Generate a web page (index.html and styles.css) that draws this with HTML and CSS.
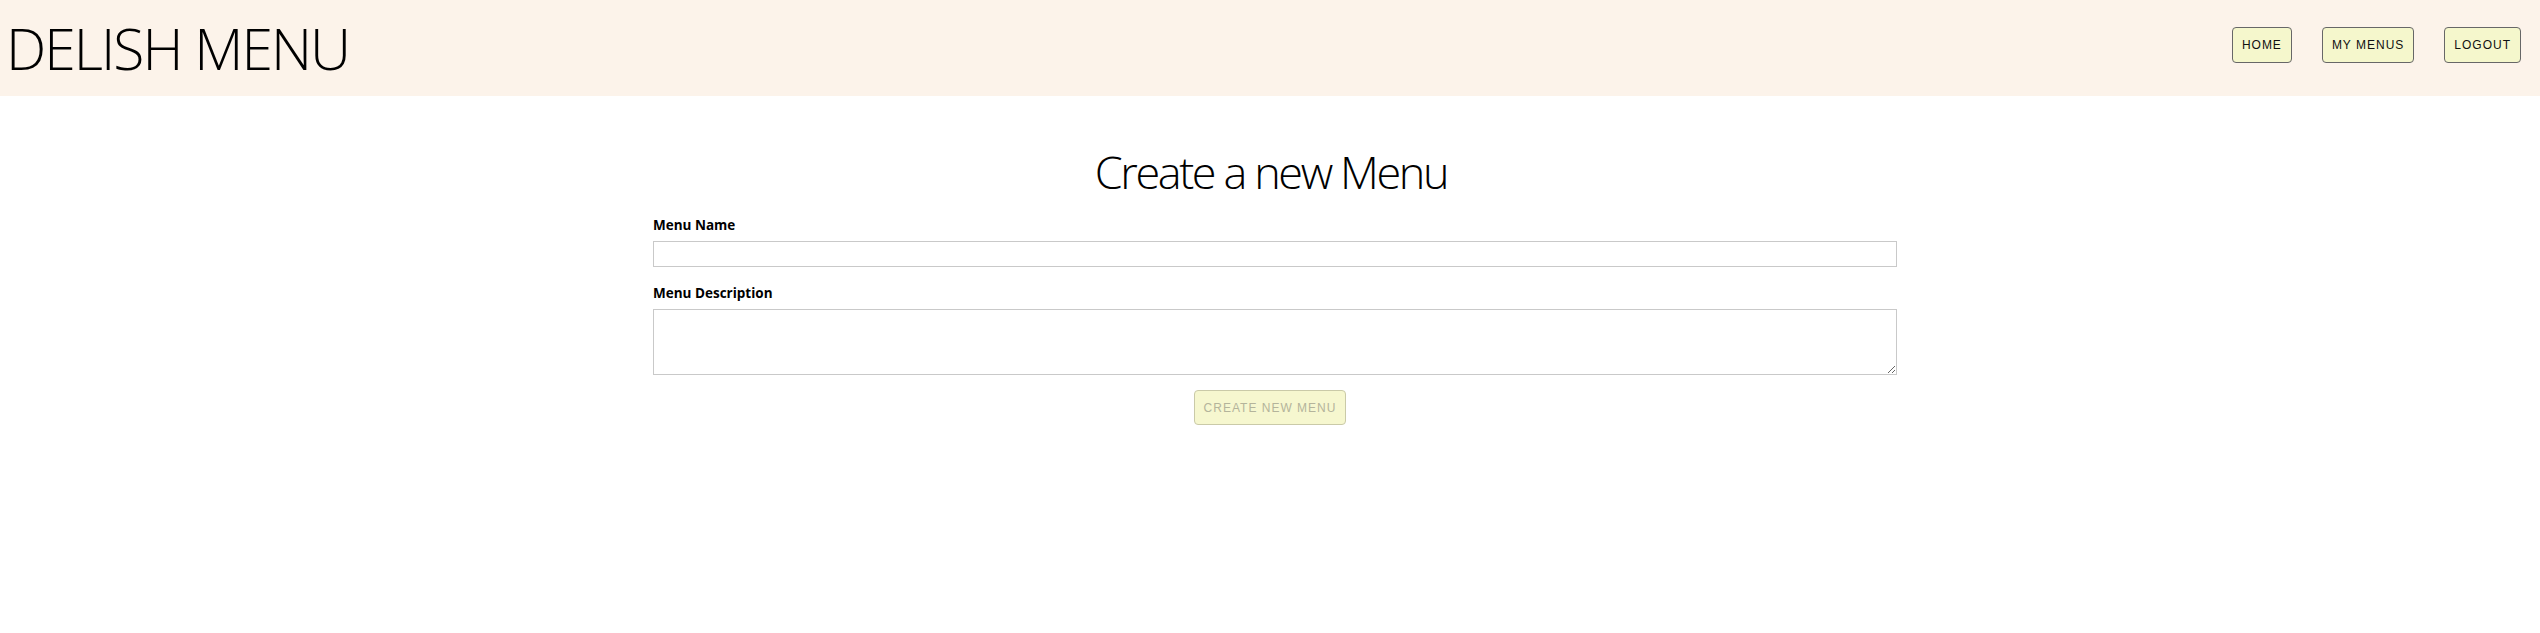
FILE: index.html
```html
<!DOCTYPE html>
<html lang="en">
<head>
<meta charset="utf-8">
<title>Delish Menu</title>
<link rel="stylesheet" href="styles.css">
</head>
<body>
<header class="topbar">
  <h1 class="brand">DELISH MENU</h1>
  <nav class="nav">
    <button class="btn" type="button">HOME</button>
    <button class="btn" type="button">MY MENUS</button>
    <button class="btn" type="button">LOGOUT</button>
  </nav>
</header>
<main class="page">
  <h2 class="page-title">Create a new Menu</h2>
  <form class="menu-form">
    <label class="field-label" for="name">Menu Name</label>
    <input class="field-input" id="name" type="text">
    <label class="field-label" for="desc">Menu Description</label>
    <textarea class="field-area" id="desc"></textarea>
    <div class="actions">
      <button class="btn btn-create" type="submit" disabled>CREATE NEW MENU</button>
    </div>
  </form>
</main>
</body>
</html>
```

FILE: styles.css
```css
html, body {
  margin: 0;
  padding: 0;
  background: #ffffff;
}

body {
  font-family: "Open Sans", "Liberation Sans", sans-serif;
  color: #000;
}

.topbar {
  height: 96px;
  background: #fcf3ea;
  display: flex;
  align-items: center;
  justify-content: space-between;
  padding: 0 19px 0 6px;
  box-sizing: border-box;
}

.brand {
  margin: 0;
  font-family: "Open Sans", sans-serif;
  font-weight: 300;
  font-size: 57px;
  line-height: 70px;
  letter-spacing: -2px;
  color: #000;
}

.nav {
  display: flex;
  gap: 30px;
  margin-top: -6px;
}

.btn {
  font-family: "Liberation Sans", Arial, sans-serif;
  font-size: 12px;
  line-height: 14px;
  letter-spacing: 1px;
  color: #111;
  background: #f5f7cc;
  border: 1px solid #676767;
  border-radius: 4px;
  padding: 10px 9px;
  margin: 0;
  cursor: pointer;
}

.page {
  display: flex;
  flex-direction: column;
  align-items: center;
}

.page-title {
  margin: 49px 0 17px;
  padding-left: 2px;
  font-family: "Open Sans", sans-serif;
  font-weight: 300;
  font-size: 45px;
  line-height: 54px;
  letter-spacing: -2.4px;
  color: #000;
}

.menu-form {
  width: 1244px;
  margin-left: 10px;
  display: flex;
  flex-direction: column;
}

.field-label {
  display: block;
  font-family: "Open Sans", sans-serif;
  font-weight: 700;
  font-size: 13.5px;
  line-height: 18px;
  margin-bottom: 7px;
}

.field-input {
  display: block;
  box-sizing: border-box;
  width: 100%;
  height: 26px;
  border: 1px solid #c9c9c9;
  background: #fff;
  margin: 0 0 17px;
  padding: 2px 4px;
}

.field-area {
  display: block;
  box-sizing: border-box;
  width: 100%;
  height: 66px;
  border: 1px solid #c9c9c9;
  background: #fff;
  margin: 0 0 15px;
  padding: 2px 4px;
}

.actions {
  display: flex;
  justify-content: center;
  margin-left: -10px;
}

.btn-create {
  padding: 10px 9px 9px;
  color: #b4b49b;
  background: #f6f7cf;
  border-color: #cacaa8;
  cursor: default;
}
```
